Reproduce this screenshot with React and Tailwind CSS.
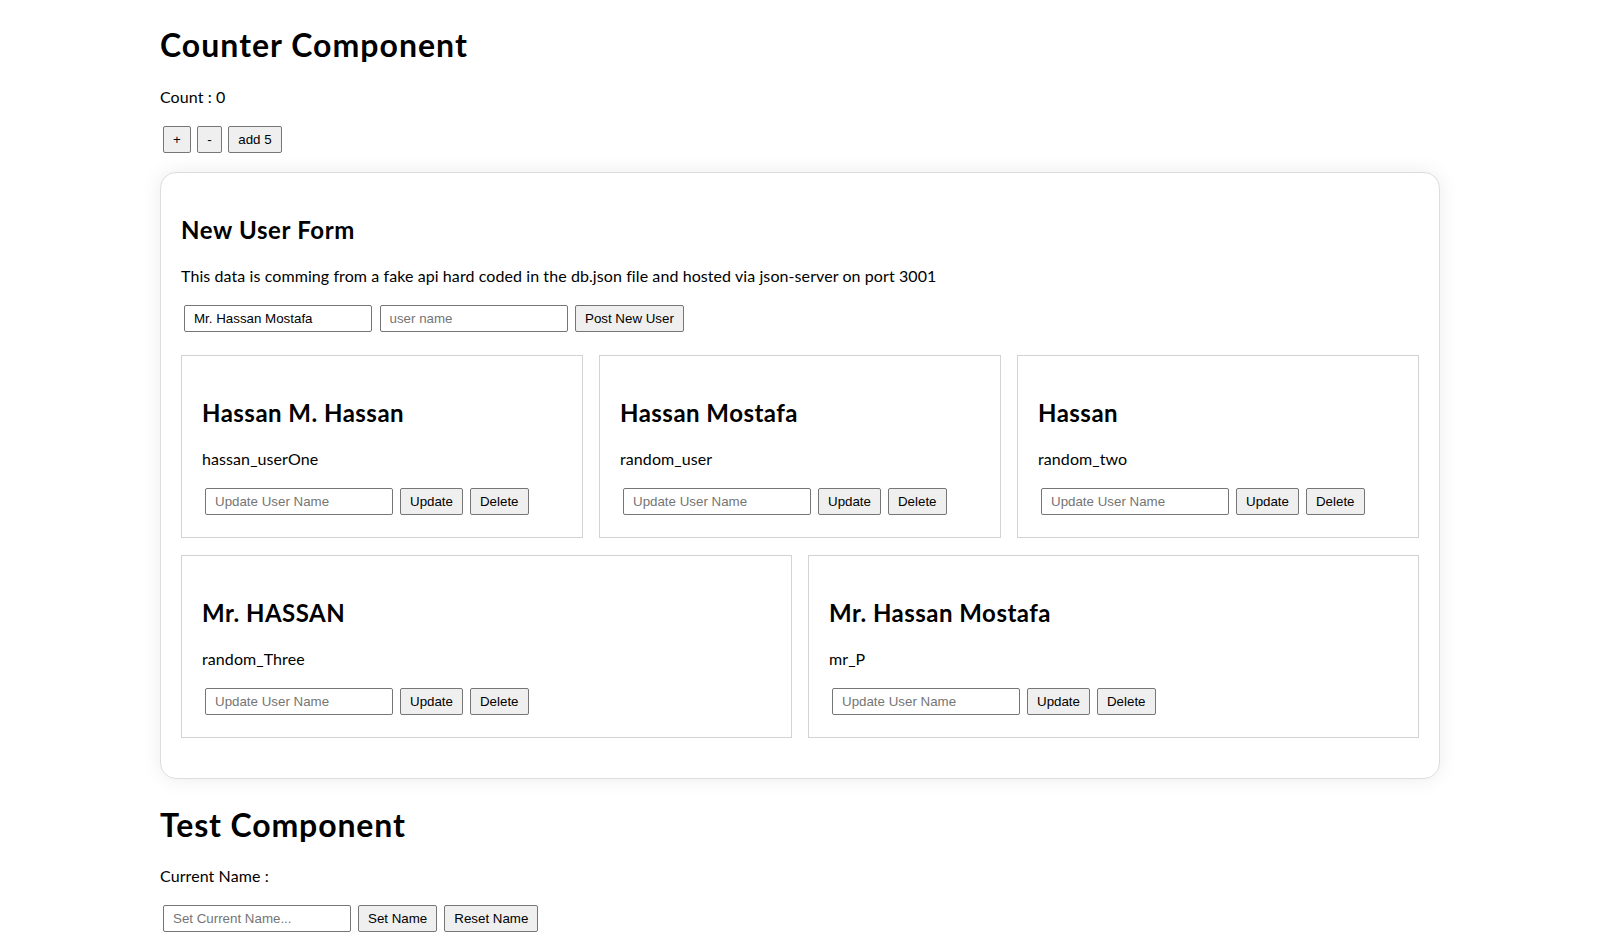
import { useState } from 'react';

const initialUsers = [
  { id: 1, name: 'Hassan M. Hassan', username: 'hassan_userOne' },
  { id: 2, name: 'Hassan Mostafa', username: 'random_user' },
  { id: 3, name: 'Hassan', username: 'random_two' },
  { id: 4, name: 'Mr. HASSAN', username: 'random_Three' },
  { id: 5, name: 'Mr. Hassan Mostafa', username: 'mr_P' },
];

const btn =
  "h-[27px] px-[9px] border border-[#767676] rounded-[2px] bg-[#efefef] text-[13.33px] leading-[15px] tracking-normal text-black font-['Liberation_Sans',Arial,sans-serif] whitespace-nowrap";
const input =
  "h-[27px] w-[188px] px-[9px] border border-[#767676] rounded-[2px] bg-white text-[13.33px] tracking-normal text-black font-['Liberation_Sans',Arial,sans-serif] placeholder:text-[#757575] outline-none";

function UserCard({ user, onUpdate, onDelete }) {
  const [value, setValue] = useState('');
  return (
    <div className="grow basis-[350px] border border-[#d3d3d3] px-5 pt-5 pb-5">
      <h2 className="mt-[19.92px] pt-[3px] text-[24px] font-bold leading-[28.92px] tracking-[0.02em]">{user.name}</h2>
      <p className="mt-[19.92px] text-base leading-[21.28px]">{user.username}</p>
      <div className="mt-[19px] mb-[2px] ml-[3px] flex items-center gap-[7px]">
        <input
          className={input}
          placeholder="Update User Name"
          value={value}
          onChange={(e) => setValue(e.target.value)}
        />
        <button className={btn} onClick={() => onUpdate(user.id, value)}>Update</button>
        <button className={btn} onClick={() => onDelete(user.id)}>Delete</button>
      </div>
    </div>
  );
}

export default function App() {
  const [count, setCount] = useState(0);
  const [users, setUsers] = useState(initialUsers);
  const [newName, setNewName] = useState('Mr. Hassan Mostafa');
  const [newUsername, setNewUsername] = useState('');
  const [currentName, setCurrentName] = useState('');
  const [draftName, setDraftName] = useState('');

  const postUser = () => {
    setUsers([...users, { id: Date.now(), name: newName, username: newUsername }]);
    setNewUsername('');
  };

  const updateUser = (id, username) => {
    if (!username) return;
    setUsers(users.map((u) => (u.id === id ? { ...u, username } : u)));
  };

  return (
    <div className="min-h-screen bg-white text-black font-['Lato','Noto_Sans',sans-serif] leading-[1.33] tracking-[0.085px]">
      <div className="mx-auto w-[1280px] pt-[21.44px]">
        {/* Counter */}
        <h1 className="pt-[3.5px] text-[32px] font-bold leading-[39.06px] tracking-[0.032em]">Counter Component</h1>
        <p className="mt-[21.44px] pt-[2px] text-base leading-[19.28px]">Count : {count}</p>
        <div className="mt-[19.28px] ml-[3px] flex items-center gap-[6.5px]">
          <button className={btn} onClick={() => setCount(count + 1)}>+</button>
          <button className={btn} onClick={() => setCount(count - 1)}>-</button>
          <button className={btn} onClick={() => setCount(count + 5)}>add 5</button>
        </div>

        {/* New user form */}
        <div className="mt-[19.3px] rounded-2xl border border-[#dddddd] bg-white px-5 pt-5 pb-5 shadow-[0_0_20px_rgba(0,0,0,0.08)]">
          <h2 className="mt-[19.92px] pt-[3px] text-[24px] font-bold leading-[28.92px] tracking-[0.027em]">New User Form</h2>
          <p className="mt-[19.92px] text-base leading-[21.28px]">
            This data is comming from a fake api hard coded in the db.json file and hosted via json-server on port 3001
          </p>
          <div className="mt-[19px] ml-[3px] flex items-center gap-[7.5px]">
            <input className={input} value={newName} onChange={(e) => setNewName(e.target.value)} />
            <input
              className={input}
              placeholder="user name"
              value={newUsername}
              onChange={(e) => setNewUsername(e.target.value)}
            />
            <button className={btn} onClick={postUser}>Post New User</button>
          </div>
          <div className="mt-[23px] mb-5 flex flex-wrap gap-x-4 gap-y-[17px]">
            {users.map((user) => (
              <UserCard
                key={user.id}
                user={user}
                onUpdate={updateUser}
                onDelete={(id) => setUsers(users.filter((u) => u.id !== id))}
              />
            ))}
          </div>
        </div>

        {/* Test component */}
        <h1 className="mt-[21.7px] pt-[3.5px] text-[32px] font-bold leading-[39.06px] tracking-[0.027em]">Test Component</h1>
        <p className="mt-[21.44px] text-base leading-[21.28px]">Current Name : {currentName}</p>
        <div className="mt-[19px] ml-[3px] flex items-center gap-[7px]">
          <input
            className={input}
            placeholder="Set Current Name..."
            value={draftName}
            onChange={(e) => setDraftName(e.target.value)}
          />
          <button className={btn} onClick={() => setCurrentName(draftName)}>Set Name</button>
          <button className={btn} onClick={() => { setCurrentName(''); setDraftName(''); }}>Reset Name</button>
        </div>
      </div>
    </div>
  );
}
